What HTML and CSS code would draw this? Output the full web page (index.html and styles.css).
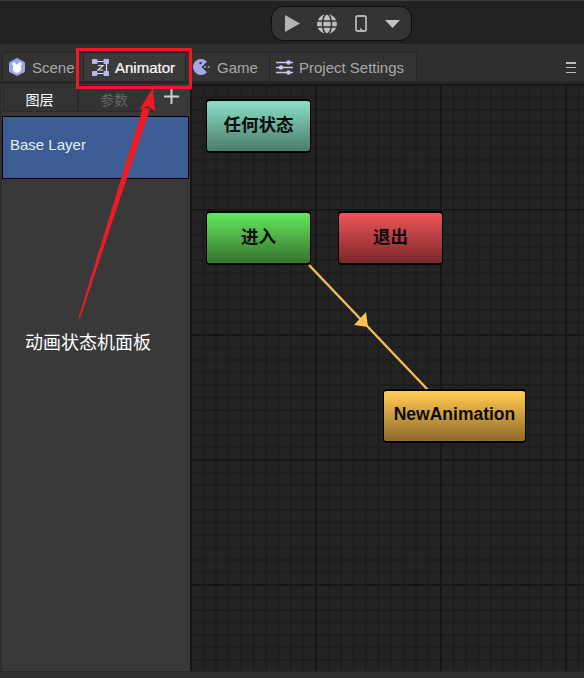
FILE: index.html
```html
<!DOCTYPE html>
<html lang="zh">
<head>
<meta charset="utf-8">
<title>Animator</title>
<link rel="stylesheet" href="styles.css">
</head>
<body>
<div class="app">
  <header class="toolbar">
    <div class="pill">
      <svg class="tool" width="15" height="17" viewBox="0 0 15 17"><path d="M0 0 L15 8.500 L0 17 Z" fill="#b4b4b4"/></svg>
      <svg class="tool" width="20" height="20" viewBox="0 0 20 20"><circle cx="10" cy="10" r="10" fill="#c0c0c0"/><path d="M0 7H20M0 13H20" stroke="#333" stroke-width="1.500"/><ellipse cx="10" cy="10" rx="4.500" ry="10" fill="none" stroke="#333" stroke-width="1.500"/></svg>
      <svg class="tool" width="12" height="17" viewBox="0 0 12 17"><rect x="1" y="1" width="10" height="15" rx="1.600" fill="none" stroke="#b4b4b4" stroke-width="1.800"/><rect x="5" y="13.500" width="2" height="1.500" fill="#b4b4b4"/></svg>
      <svg class="tool" width="15" height="8" viewBox="0 0 15 8"><path d="M0 0H15L7.500 8Z" fill="#c4c4c4"/></svg>
    </div>
  </header>
  <nav class="tabbar">
    <div class="tab tab-scene">
      <svg width="16" height="18" viewBox="0 0 16 18"><path d="M8 0 L15 3.800 Q16 4.400 16 5.500 V12.500 Q16 13.600 15 14.200 L8 18 L1 14.200 Q0 13.600 0 12.500 V5.500 Q0 4.400 1 3.800 Z" fill="#a0a4ea"/><circle cx="5" cy="6" r="1.800" fill="#fff"/><circle cx="11" cy="6" r="1.800" fill="#fff"/><ellipse cx="8" cy="10.500" rx="4.200" ry="4.200" fill="#fff"/></svg>
      <span>Scene</span>
    </div>
    <div class="tab tab-active">
      <svg width="17" height="17" viewBox="0 0 17 17"><g fill="#b4b8f2"><rect x="0" y="0" width="5.500" height="5" rx="1"/><rect x="11.500" y="0" width="5.500" height="5" rx="1"/><rect x="0" y="12" width="5.500" height="5" rx="1"/><rect x="11.500" y="12" width="5.500" height="5" rx="1"/></g><path d="M5.500 2.500H11.500M14.500 5V12M5.500 14.500H11.500M6 6.500H11L6 11H11" stroke="#dfe0f8" stroke-width="1.200" fill="none"/></svg>
      <span class="tab-active-label">Animator</span>
    </div>
    <div class="tab tab-game">
      <svg width="17" height="16" viewBox="0 0 17 16"><path d="M14 2.700 A8 8 0 1 0 14 13.300 L8.500 8 Z" fill="#a6a9ec"/><circle cx="7.500" cy="4" r="1.200" fill="#2f2f2f"/><circle cx="12" cy="8" r="1" fill="#a6a9ec"/><circle cx="15.500" cy="8" r="1" fill="#a6a9ec"/></svg>
      <span>Game</span>
    </div>
    <div class="tab tab-settings">
      <svg width="17" height="15" viewBox="0 0 17 15"><g stroke="#c6c8f0" stroke-width="1.400"><path d="M0 2.500H17M0 7.500H17M0 12.500H17"/></g><g fill="#c6c8f0"><circle cx="12.500" cy="2.500" r="2.200"/><circle cx="5" cy="7.500" r="2.200"/><circle cx="12.500" cy="12.500" r="2.200"/></g></svg>
      <span>Project Settings</span>
    </div>
    <div class="menu"><i></i><i></i><i></i></div>
  </nav>
  <main class="workspace">
    <aside class="side">
      <div class="side-tabs">
        <div class="side-tab side-tab-on">图层</div>
        <div class="side-tab side-tab-off">参数</div>
        <svg class="plus" width="15" height="15" viewBox="0 0 15 15"><path d="M0 7.500H15M7.500 0V15" stroke="#cfcfcf" stroke-width="2"/></svg>
      </div>
      <div class="layer">Base Layer</div>
    </aside>
    <section class="canvas">
      <svg class="wire" width="394" height="588" viewBox="0 0 394 588">
        <path d="M119 181 L238 306" stroke="#f6bd55" stroke-width="2.400" fill="none"/>
        <path d="M164 241 L176 228 L178 243 Z" fill="#fdc24f"/>
      </svg>
      <div class="node node-any"><span class="label-cjk">任何状态</span></div>
      <div class="node node-entry"><span class="label-cjk">进入</span></div>
      <div class="node node-exit"><span class="label-cjk">退出</span></div>
      <div class="node node-anim"><span class="label-latin">NewAnimation</span></div>
    </section>
  </main>
</div>
<div class="callout"></div>
<svg class="pointer" width="584" height="678" viewBox="0 0 584 678"><path d="M78.500 318 L80 318.500 L150 109 L143 107 Z" fill="#ed1c24"/><path d="M153 88 L155 111 L147 106 L139 110 Z" fill="#ed1c24"/></svg>
<div class="note">动画状态机面板</div>
</body>
</html>
```
FILE: styles.css
```css
* { box-sizing: border-box; }
html, body { margin: 0; height: 100%; background: #2f2f2f; overflow: hidden; }
body { font-family: "Liberation Sans", "Noto Sans CJK SC", sans-serif; position: relative; }
.app { width: 584px; height: 678px; display: flex; flex-direction: column; }

.toolbar { height: 44px; background: #222; border-top: 1px solid #3a3a3a; padding: 5px 0 0 271px; flex: none; }
.pill { width: 141px; height: 35px; border: 1px solid #0d0d0d; border-radius: 12px; background: #333; display: flex; align-items: center; }
.tool { flex: none; }
.pill .tool:nth-child(1) { margin-left: 13px; }
.pill .tool:nth-child(2) { margin-left: 17px; }
.pill .tool:nth-child(3) { margin-left: 18px; }
.pill .tool:nth-child(4) { margin-left: 18px; }

.tabbar { height: 40px; flex: none; background: #2f2f2f; padding: 8px 0 0 2px; display: flex; border-bottom: 3px solid #262626; position: relative; }
.tab { height: 29px; display: flex; align-items: center; font-size: 15px; color: #a8a8a8; background: #333; border: 1px solid #262626; border-bottom: 0; border-left: 0; flex: none; }
.tab-scene { width: 82px; padding-left: 6px; gap: 7px; border-left: 1px solid #262626; }
.tab-active { width: 102px; padding-left: 8px; gap: 6px; color: #fff; background: #3a3a3a; }
.tab-active-label { -webkit-text-stroke: 0.2px #fff; }
.tab-game { width: 84px; padding-left: 7px; gap: 7px; }
.tab-settings { width: 147px; padding-left: 6px; gap: 6px; }
.menu { position: absolute; left: 566px; top: 18px; width: 10px; height: 11px; display: flex; flex-direction: column; justify-content: space-between; }
.menu i { display: block; height: 1.5px; background: #bdbdbd; }

.workspace { height: 588px; flex: none; display: flex; border-bottom: 1px solid #262626; }
.side { width: 190px; flex: none; background: #393939; border-left: 2px solid #2f2f2f; padding-top: 1px; }
.side-tabs { height: 27px; display: flex; align-items: center; }
.side-tab { width: 75px; height: 27px; background: #333; border: 1px solid #2a2a2a; display: flex; align-items: center; justify-content: center; font-size: 14px; padding-right: 2px; }
.side-tab-on { margin-left: 1px; color: #fff; }
.side-tab-off { color: #666; padding-right: 3px; }
.plus { flex: none; margin: -5px 0 0 11px; }
.layer { margin-top: 4px; height: 63px; width: 187px; background: #3c5d93; border: 1px solid #000; color: #e8edf5; font-size: 15px; display: flex; align-items: center; padding-left: 7px; padding-bottom: 7px; }

.canvas { position: relative; flex: 1; background-color: #232323;
  background-image:
    linear-gradient(to right, #161616 2px, transparent 2px),
    linear-gradient(to bottom, #161616 2px, transparent 2px),
    linear-gradient(to right, #1d1d1d 1.500px, transparent 1.500px),
    linear-gradient(to bottom, #1d1d1d 1.500px, transparent 1.500px);
  background-size: 125px 125px, 125px 125px, 12.5px 12.5px, 12.5px 12.5px;
}
.wire { position: absolute; left: 0; top: 0; }
.node { position: absolute; display: flex; align-items: center; justify-content: center; border: 1px solid #000; border-top-width: 2px; border-bottom-width: 2px; border-radius: 4px; height: 54px; width: 105px; font-weight: bold; font-size: 17.5px; color: #0b0b0b; }
.label-cjk { margin-top: -6px; }
.label-latin { margin: -3px 0 0 0; }
.node-any { left: 16px; top: 15px; background: linear-gradient(#86dcc3 5%, #4f806f 95%); }
.node-entry { left: 16px; top: 127px; background: linear-gradient(#62e35a 5%, #37782f 95%); }
.node-exit { left: 148px; top: 127px; background: linear-gradient(#e85355 5%, #7f2a2c 95%); }
.node-anim { left: 193px; top: 305px; width: 143px; background: linear-gradient(#ffc850 5%, #936e2d 95%); }

.callout { position: absolute; left: 76px; top: 48px; width: 116px; height: 41px; border: 3px solid #ed1c24; }
.pointer { position: absolute; left: 0; top: 0; }
.note { position: absolute; left: 25px; top: 333px; font-size: 18px; line-height: 20px; color: #fff; }
```
